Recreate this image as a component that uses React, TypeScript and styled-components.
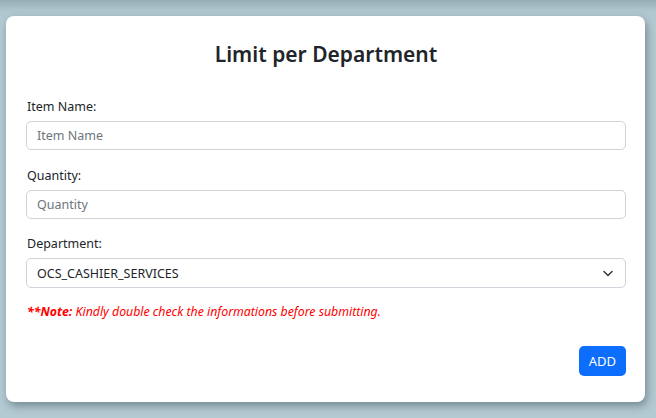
import React from "react";
import styled, { createGlobalStyle } from "styled-components";

const Global = createGlobalStyle`
  html, body { margin: 0; padding: 0; }
  body {
    width: 656px;
    height: 418px;
    overflow: hidden;
    background: linear-gradient(to bottom, #97adb5 0px, #afc5cd 10px, #b4cad2 20px, #b4cad2 100%);
    font-family: "Segoe UI", "Noto Sans", "Open Sans", sans-serif;
    color: #212529;
  }
`;

const Page = styled.div`
  padding: 16px 11px 16px 6px;
`;

const Card = styled.div`
  background: #fff;
  border-radius: 8px;
  box-shadow: 2px 4px 8px rgba(40, 60, 70, 0.45);
  height: 386px;
  box-sizing: border-box;
  padding: 26px 19px 26px 20px;
  display: flex;
  flex-direction: column;
`;

const Title = styled.h4`
  margin: 0 0 30px;
  text-align: center;
  font-size: 21px;
  font-weight: 600;
  line-height: 25px;
  color: #212529;
`;

const Field = styled.div<{ $gap?: number }>`
  display: flex;
  flex-direction: column;
  margin-bottom: ${(p) => p.$gap ?? 16}px;
`;

const Label = styled.label`
  font-size: 12.5px;
  line-height: 19px;
  margin-bottom: 5px;
  padding-left: 1px;
`;

const Input = styled.input`
  box-sizing: border-box;
  height: 29px;
  width: 100%;
  border: 1px solid #ced4da;
  border-radius: 5px;
  padding: 0 10px;
  font: inherit;
  font-size: 12.5px;
  color: #212529;
  outline: none;
  &::placeholder { color: #6c757d; }
`;

const SelectBox = styled.div`
  box-sizing: border-box;
  height: 30px;
  border: 1px solid #ced4da;
  border-radius: 5px;
  padding: 0 12px 0 10px;
  display: flex;
  align-items: center;
  justify-content: space-between;
  font-size: 12.5px;
  color: #212529;
`;

const Note = styled.p`
  margin: 0;
  font-size: 12.3px;
  line-height: 18px;
  font-style: italic;
  color: #ff0000;
  padding-left: 1px;
  & b { font-weight: 700; }
`;

const Footer = styled.div`
  margin-top: auto;
  display: flex;
  justify-content: flex-end;
`;

const Button = styled.button`
  height: 30px;
  padding: 0 10px;
  border: none;
  border-radius: 5px;
  background: #0d6efd;
  color: #fff;
  font: inherit;
  font-size: 13px;
`;

export default function App() {
  return (
    <>
      <Global />
      <Page>
        <Card>
          <Title>Limit per Department</Title>
          <Field>
            <Label>Item Name:</Label>
            <Input placeholder="Item Name" />
          </Field>
          <Field $gap={15}>
            <Label>Quantity:</Label>
            <Input placeholder="Quantity" />
          </Field>
          <Field $gap={15}>
            <Label>Department:</Label>
            <SelectBox>
              <span>OCS_CASHIER_SERVICES</span>
              <svg width="10" height="7" viewBox="0 0 10 7">
                <path d="M1 1.5 L5 5.5 L9 1.5" fill="none" stroke="#343a40" strokeWidth="1.5" strokeLinecap="round" strokeLinejoin="round" />
              </svg>
            </SelectBox>
          </Field>
          <Note>
            <b>**Note:</b> Kindly double check the informations before submitting.
          </Note>
          <Footer>
            <Button>ADD</Button>
          </Footer>
        </Card>
      </Page>
    </>
  );
}
